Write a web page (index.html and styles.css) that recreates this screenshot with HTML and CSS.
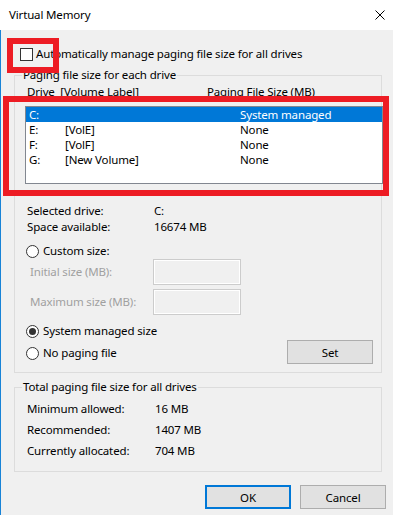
FILE: index.html
```html
<!DOCTYPE html>
<html lang="en">
<head>
    <meta charset="UTF-8">
    <meta name="viewport" content="width=device-width, initial-scale=1.0">
    <title>Virtual Memory</title>
    <link rel="stylesheet" href="styles.css">
</head>
<body>
    <div class="window">
        <div class="titlebar">
            <span class="title">Virtual Memory</span>
            <svg class="close" width="10" height="10" viewBox="0 0 10 10">
                <path d="M0.5 0.5L9.5 9.5M9.5 0.5L0.5 9.5" stroke="#000" stroke-width="1" fill="none"/>
            </svg>
        </div>

        <div class="client">
            <div class="auto-row">
                <span class="checkbox"></span>
                <span>Automatically manage paging file size for all drives</span>
            </div>

            <fieldset class="group drives">
                <legend>Paging file size for each drive</legend>
                <div class="list-head">
                    <span class="pre">Drive  [Volume Label]</span>
                    <span>Paging File Size (MB)</span>
                </div>
                <div class="listbox">
                    <div class="row selected"><span>C:</span><span></span><span>System managed</span></div>
                    <div class="row"><span>E:</span><span>[VolE]</span><span>None</span></div>
                    <div class="row"><span>F:</span><span>[VolF]</span><span>None</span></div>
                    <div class="row"><span>G:</span><span>[New Volume]</span><span>None</span></div>
                </div>

                <div class="info">
                    <span>Selected drive:</span><span>C:</span>
                    <span>Space available:</span><span>16674 MB</span>
                </div>

                <div class="radio-row custom">
                    <span class="radio"></span>
                    <span>Custom size:</span>
                </div>
                <div class="sizes">
                    <span class="disabled">Initial size (MB):</span>
                    <span class="textbox"></span>
                    <span class="disabled">Maximum size (MB):</span>
                    <span class="textbox"></span>
                </div>

                <div class="bottom-row">
                    <div class="radio-list">
                        <div class="radio-row">
                            <span class="radio checked"></span>
                            <span>System managed size</span>
                        </div>
                        <div class="radio-row">
                            <span class="radio"></span>
                            <span>No paging file</span>
                        </div>
                    </div>
                    <button class="btn set-btn">Set</button>
                </div>
            </fieldset>

            <fieldset class="group totals-group">
                <legend>Total paging file size for all drives</legend>
                <div class="totals">
                    <span>Minimum allowed:</span><span>16 MB</span>
                    <span>Recommended:</span><span>1407 MB</span>
                    <span>Currently allocated:</span><span>704 MB</span>
                </div>
            </fieldset>

            <div class="actions">
                <button class="btn default">OK</button>
                <button class="btn">Cancel</button>
            </div>
        </div>

        <!-- red annotation boxes -->
        <div class="callout callout-check"></div>
        <div class="callout callout-list"></div>
    </div>
</body>
</html>
```

FILE: styles.css
```css
body {
    margin: 0;
    font-family: 'Noto Sans', 'Open Sans', sans-serif;
    font-size: 11.5px;
    letter-spacing: -0.15px;
    line-height: 16px;
    color: #000;
    background-color: #f0f0f0;
    width: 393px;
    height: 515px;
    overflow: hidden;
}
.window {
    position: relative;
    height: 515px;
}
.titlebar {
    height: 30px;
    background-color: #fff;
    display: flex;
    align-items: center;
    justify-content: space-between;
    padding: 0 8px 0 9px;
}
.close {
    display: block;
}
.client {
    border-left: 1px solid #1883d7;
    height: 485px;
    padding-top: 16px;
    box-sizing: border-box;
}
.auto-row {
    display: flex;
    align-items: center;
    height: 16px;
    padding-left: 19px;
}
.checkbox {
    width: 13px;
    height: 13px;
    box-sizing: border-box;
    border: 1px solid #333;
    background-color: #fff;
    margin-right: 3px;
}
.group {
    margin: 5px 0 0 13px;
    width: 368px;
    box-sizing: border-box;
    border: 1px solid #dcdcdc;
    padding: 1px 0 8px 12px;
    min-inline-size: 0;
}
.group legend {
    padding: 0 1px;
    margin-left: -5px;
    line-height: 16px;
}
.list-head {
    display: grid;
    grid-template-columns: 180px auto;
}
.pre {
    white-space: pre;
}
.listbox {
    margin: 6px 0 0 -2px;
    width: 358px;
    height: 78px;
    box-sizing: border-box;
    border: 1px solid #828790;
    background-color: #fff;
}
.row {
    display: grid;
    grid-template-columns: 36px 175px 1fr;
    height: 15px;
    line-height: 15px;
    padding-left: 3px;
}
.row.selected {
    background-color: #0078d7;
    color: #fff;
}
.info {
    display: grid;
    grid-template-columns: 127px auto;
    margin-top: 19px;
}
.radio-row {
    display: flex;
    align-items: center;
    height: 16px;
    margin-left: -1px;
}
.radio-row.custom {
    margin-top: 8px;
}
.radio {
    width: 13px;
    height: 13px;
    box-sizing: border-box;
    border: 1px solid #333;
    border-radius: 50%;
    background-color: #fff;
    margin-right: 4px;
    display: flex;
    align-items: center;
    justify-content: center;
}
.radio.checked::after {
    content: '';
    width: 7px;
    height: 7px;
    border-radius: 50%;
    background-color: #333;
}
.sizes {
    display: grid;
    grid-template-columns: 123px 88px;
    row-gap: 4px;
    margin-left: 3px;
}
.disabled {
    color: #a0a0a0;
    align-self: center;
}
.textbox {
    height: 26px;
    box-sizing: border-box;
    border: 1px solid #cccccc;
    box-shadow: inset 0 0 0 1px #fff;
    background-color: #f0f0f0;
}
.bottom-row {
    display: flex;
    justify-content: space-between;
    align-items: flex-start;
    margin-top: 8px;
}
.radio-list {
    display: flex;
    flex-direction: column;
    gap: 6px;
}
.btn {
    font-family: inherit;
    font-size: inherit;
    letter-spacing: inherit;
    color: #000;
    width: 86px;
    height: 24px;
    padding: 0;
    background-color: #e1e1e1;
    border: 1px solid #adadad;
    border-radius: 0;
}
.set-btn {
    margin-top: 17px;
    margin-right: 8px;
}
.totals-group {
    margin-top: 6px;
    padding: 3px 0 10px 12px;
}
.totals {
    display: grid;
    grid-template-columns: 128px auto;
    line-height: 21px;
}
.actions {
    display: flex;
    justify-content: flex-end;
    gap: 9px;
    margin-top: 13px;
    padding-right: 7px;
}
.btn.default {
    border: 2px solid #0078d7;
}
.callout {
    position: absolute;
    border: 6px solid #ed1c24;
    box-sizing: border-box;
}
.callout-check {
    left: 7px;
    top: 38px;
    width: 52px;
    height: 35px;
}
.callout-list {
    left: 3px;
    top: 96px;
    width: 386px;
    height: 100px;
}
```
